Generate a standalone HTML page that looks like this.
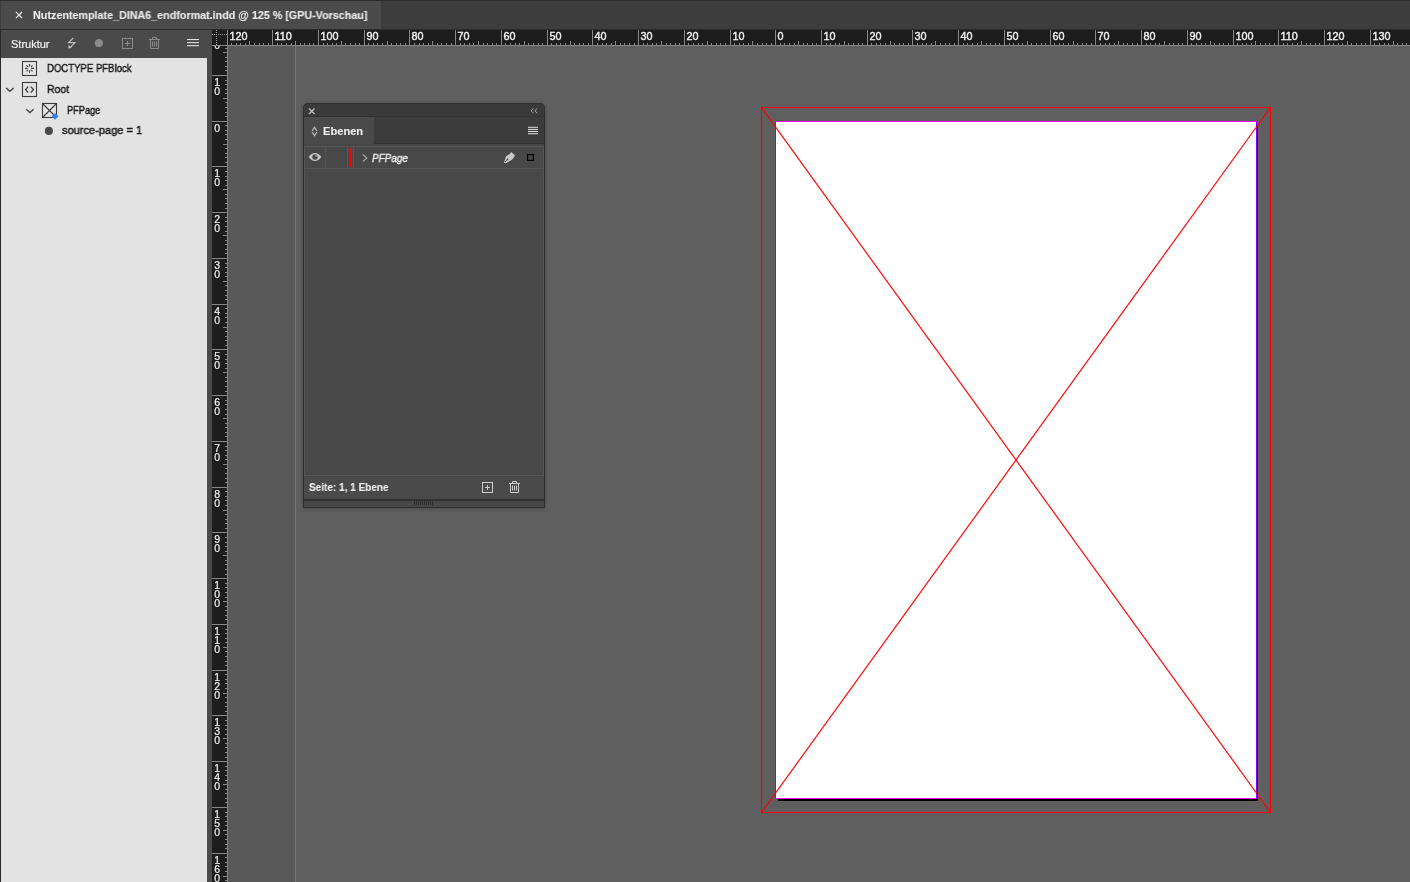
<!DOCTYPE html>
<html><head><meta charset="utf-8">
<style>
*{margin:0;padding:0;box-sizing:border-box}
html,body{width:1410px;height:882px;overflow:hidden;background:#2b2b2b;font-family:"Liberation Sans",sans-serif}
.a{position:absolute}
.t{position:absolute;white-space:nowrap;line-height:1;transform-origin:0 0;-webkit-text-stroke:0.1px currentColor;will-change:transform}
.dk{color:#1a1a1a;-webkit-text-stroke:0.45px #1a1a1a}
</style></head><body>
<!-- tab bar -->
<div class="a" style="left:0;top:0;width:1410px;height:29px;background:#3d3d3d;border-top:1px solid #2e2e2e"></div>
<div class="a" style="left:1px;top:1px;width:380px;height:28px;background:#4b4b4b"></div>
<div class="t" style="left:32.6px;top:10px;font-size:10.8px;font-weight:bold;color:#ededed;transform:scaleX(0.995)">Nutzentemplate_DINA6_endformat.indd @ 125 % [GPU-Vorschau]</div>

<!-- left panel -->
<div class="a" style="left:1px;top:30px;width:211px;height:28px;background:#4a4a4a"></div>
<div class="a" style="left:207px;top:58px;width:5px;height:824px;background:#4a4a4a"></div>
<div class="a" style="left:1px;top:58px;width:206px;height:824px;background:#e3e3e3"></div>
<div class="t" style="left:10.7px;top:39px;font-size:11px;color:#f0f0f0;-webkit-text-stroke:0.2px #f0f0f0">Struktur</div>
<div class="t dk" style="left:46.6px;top:63px;font-size:11.4px;transform:scaleX(0.84)">DOCTYPE PFBlock</div>
<div class="t dk" style="left:46.6px;top:84px;font-size:11.4px;transform:scaleX(0.92)">Root</div>
<div class="t dk" style="left:66.6px;top:105px;font-size:11.4px;transform:scaleX(0.81)">PFPage</div>
<div class="t dk" style="left:61.5px;top:125px;font-size:11.4px;transform:scaleX(0.97)">source-page = 1</div>

<!-- rulers -->
<div class="a" style="left:212px;top:30px;width:1198px;height:15px;background:#1d1d1d"></div>
<div class="a" style="left:212px;top:45px;width:15px;height:837px;background:#1d1d1d"></div>
<!-- canvas -->
<div class="a" style="left:228px;top:46px;width:1182px;height:836px;background:#5f5f5f"></div>
<div class="a" style="left:228px;top:46px;width:67px;height:836px;background:#595959"></div>
<div class="a" style="left:295px;top:46px;width:1px;height:836px;background:#767676"></div>
<svg class="a" style="left:0;top:0" width="1410" height="882">
 <g fill="#f0f0f0" stroke="#f0f0f0" stroke-width="0.2" font-family="Liberation Sans" font-size="10.5" text-anchor="middle"><text x="217.2" y="48.9">0</text><text x="217.2" y="85.5">1</text><text x="217.2" y="94.9">0</text><text x="217.2" y="131.5">0</text><text x="217.2" y="176.5">1</text><text x="217.2" y="185.9">0</text><text x="217.2" y="222.5">2</text><text x="217.2" y="231.9">0</text><text x="217.2" y="268.5">3</text><text x="217.2" y="277.9">0</text><text x="217.2" y="314.5">4</text><text x="217.2" y="323.9">0</text><text x="217.2" y="359.5">5</text><text x="217.2" y="368.9">0</text><text x="217.2" y="405.5">6</text><text x="217.2" y="414.9">0</text><text x="217.2" y="451.5">7</text><text x="217.2" y="460.9">0</text><text x="217.2" y="497.5">8</text><text x="217.2" y="506.9">0</text><text x="217.2" y="542.5">9</text><text x="217.2" y="551.9">0</text><text x="217.2" y="588.5">1</text><text x="217.2" y="597.9">0</text><text x="217.2" y="607.3">0</text><text x="217.2" y="634.5">1</text><text x="217.2" y="643.9">1</text><text x="217.2" y="653.3">0</text><text x="217.2" y="680.5">1</text><text x="217.2" y="689.9">2</text><text x="217.2" y="699.3">0</text><text x="217.2" y="725.5">1</text><text x="217.2" y="734.9">3</text><text x="217.2" y="744.3">0</text><text x="217.2" y="771.5">1</text><text x="217.2" y="780.9">4</text><text x="217.2" y="790.3">0</text><text x="217.2" y="817.5">1</text><text x="217.2" y="826.9">5</text><text x="217.2" y="836.3">0</text><text x="217.2" y="863.5">1</text><text x="217.2" y="872.9">6</text><text x="217.2" y="882.3">0</text></g>
 <rect x="212" y="30" width="15" height="15" fill="#1d1d1d"/>
 <g fill="#878787"><rect x="227" y="30" width="1" height="15"/><rect x="231" y="43" width="1" height="2"/><rect x="236" y="43" width="1" height="2"/><rect x="240" y="43" width="1" height="2"/><rect x="245" y="43" width="1" height="2"/><rect x="249" y="41" width="1" height="4"/><rect x="254" y="43" width="1" height="2"/><rect x="259" y="43" width="1" height="2"/><rect x="263" y="43" width="1" height="2"/><rect x="268" y="43" width="1" height="2"/><rect x="272" y="30" width="1" height="15"/><rect x="277" y="43" width="1" height="2"/><rect x="281" y="43" width="1" height="2"/><rect x="286" y="43" width="1" height="2"/><rect x="291" y="43" width="1" height="2"/><rect x="295" y="41" width="1" height="4"/><rect x="300" y="43" width="1" height="2"/><rect x="304" y="43" width="1" height="2"/><rect x="309" y="43" width="1" height="2"/><rect x="313" y="43" width="1" height="2"/><rect x="318" y="30" width="1" height="15"/><rect x="323" y="43" width="1" height="2"/><rect x="327" y="43" width="1" height="2"/><rect x="332" y="43" width="1" height="2"/><rect x="336" y="43" width="1" height="2"/><rect x="341" y="41" width="1" height="4"/><rect x="345" y="43" width="1" height="2"/><rect x="350" y="43" width="1" height="2"/><rect x="355" y="43" width="1" height="2"/><rect x="359" y="43" width="1" height="2"/><rect x="364" y="30" width="1" height="15"/><rect x="368" y="43" width="1" height="2"/><rect x="373" y="43" width="1" height="2"/><rect x="377" y="43" width="1" height="2"/><rect x="382" y="43" width="1" height="2"/><rect x="387" y="41" width="1" height="4"/><rect x="391" y="43" width="1" height="2"/><rect x="396" y="43" width="1" height="2"/><rect x="400" y="43" width="1" height="2"/><rect x="405" y="43" width="1" height="2"/><rect x="409" y="30" width="1" height="15"/><rect x="414" y="43" width="1" height="2"/><rect x="419" y="43" width="1" height="2"/><rect x="423" y="43" width="1" height="2"/><rect x="428" y="43" width="1" height="2"/><rect x="432" y="41" width="1" height="4"/><rect x="437" y="43" width="1" height="2"/><rect x="441" y="43" width="1" height="2"/><rect x="446" y="43" width="1" height="2"/><rect x="451" y="43" width="1" height="2"/><rect x="455" y="30" width="1" height="15"/><rect x="460" y="43" width="1" height="2"/><rect x="464" y="43" width="1" height="2"/><rect x="469" y="43" width="1" height="2"/><rect x="473" y="43" width="1" height="2"/><rect x="478" y="41" width="1" height="4"/><rect x="483" y="43" width="1" height="2"/><rect x="487" y="43" width="1" height="2"/><rect x="492" y="43" width="1" height="2"/><rect x="496" y="43" width="1" height="2"/><rect x="501" y="30" width="1" height="15"/><rect x="505" y="43" width="1" height="2"/><rect x="510" y="43" width="1" height="2"/><rect x="515" y="43" width="1" height="2"/><rect x="519" y="43" width="1" height="2"/><rect x="524" y="41" width="1" height="4"/><rect x="528" y="43" width="1" height="2"/><rect x="533" y="43" width="1" height="2"/><rect x="538" y="43" width="1" height="2"/><rect x="542" y="43" width="1" height="2"/><rect x="547" y="30" width="1" height="15"/><rect x="551" y="43" width="1" height="2"/><rect x="556" y="43" width="1" height="2"/><rect x="560" y="43" width="1" height="2"/><rect x="565" y="43" width="1" height="2"/><rect x="570" y="41" width="1" height="4"/><rect x="574" y="43" width="1" height="2"/><rect x="579" y="43" width="1" height="2"/><rect x="583" y="43" width="1" height="2"/><rect x="588" y="43" width="1" height="2"/><rect x="592" y="30" width="1" height="15"/><rect x="597" y="43" width="1" height="2"/><rect x="602" y="43" width="1" height="2"/><rect x="606" y="43" width="1" height="2"/><rect x="611" y="43" width="1" height="2"/><rect x="615" y="41" width="1" height="4"/><rect x="620" y="43" width="1" height="2"/><rect x="624" y="43" width="1" height="2"/><rect x="629" y="43" width="1" height="2"/><rect x="634" y="43" width="1" height="2"/><rect x="638" y="30" width="1" height="15"/><rect x="643" y="43" width="1" height="2"/><rect x="647" y="43" width="1" height="2"/><rect x="652" y="43" width="1" height="2"/><rect x="656" y="43" width="1" height="2"/><rect x="661" y="41" width="1" height="4"/><rect x="666" y="43" width="1" height="2"/><rect x="670" y="43" width="1" height="2"/><rect x="675" y="43" width="1" height="2"/><rect x="679" y="43" width="1" height="2"/><rect x="684" y="30" width="1" height="15"/><rect x="688" y="43" width="1" height="2"/><rect x="693" y="43" width="1" height="2"/><rect x="698" y="43" width="1" height="2"/><rect x="702" y="43" width="1" height="2"/><rect x="707" y="41" width="1" height="4"/><rect x="711" y="43" width="1" height="2"/><rect x="716" y="43" width="1" height="2"/><rect x="720" y="43" width="1" height="2"/><rect x="725" y="43" width="1" height="2"/><rect x="730" y="30" width="1" height="15"/><rect x="734" y="43" width="1" height="2"/><rect x="739" y="43" width="1" height="2"/><rect x="743" y="43" width="1" height="2"/><rect x="748" y="43" width="1" height="2"/><rect x="752" y="41" width="1" height="4"/><rect x="757" y="43" width="1" height="2"/><rect x="762" y="43" width="1" height="2"/><rect x="766" y="43" width="1" height="2"/><rect x="771" y="43" width="1" height="2"/><rect x="775" y="30" width="1" height="15"/><rect x="780" y="43" width="1" height="2"/><rect x="784" y="43" width="1" height="2"/><rect x="789" y="43" width="1" height="2"/><rect x="794" y="43" width="1" height="2"/><rect x="798" y="41" width="1" height="4"/><rect x="803" y="43" width="1" height="2"/><rect x="807" y="43" width="1" height="2"/><rect x="812" y="43" width="1" height="2"/><rect x="816" y="43" width="1" height="2"/><rect x="821" y="30" width="1" height="15"/><rect x="826" y="43" width="1" height="2"/><rect x="830" y="43" width="1" height="2"/><rect x="835" y="43" width="1" height="2"/><rect x="839" y="43" width="1" height="2"/><rect x="844" y="41" width="1" height="4"/><rect x="848" y="43" width="1" height="2"/><rect x="853" y="43" width="1" height="2"/><rect x="858" y="43" width="1" height="2"/><rect x="862" y="43" width="1" height="2"/><rect x="867" y="30" width="1" height="15"/><rect x="871" y="43" width="1" height="2"/><rect x="876" y="43" width="1" height="2"/><rect x="880" y="43" width="1" height="2"/><rect x="885" y="43" width="1" height="2"/><rect x="890" y="41" width="1" height="4"/><rect x="894" y="43" width="1" height="2"/><rect x="899" y="43" width="1" height="2"/><rect x="903" y="43" width="1" height="2"/><rect x="908" y="43" width="1" height="2"/><rect x="912" y="30" width="1" height="15"/><rect x="917" y="43" width="1" height="2"/><rect x="922" y="43" width="1" height="2"/><rect x="926" y="43" width="1" height="2"/><rect x="931" y="43" width="1" height="2"/><rect x="935" y="41" width="1" height="4"/><rect x="940" y="43" width="1" height="2"/><rect x="945" y="43" width="1" height="2"/><rect x="949" y="43" width="1" height="2"/><rect x="954" y="43" width="1" height="2"/><rect x="958" y="30" width="1" height="15"/><rect x="963" y="43" width="1" height="2"/><rect x="967" y="43" width="1" height="2"/><rect x="972" y="43" width="1" height="2"/><rect x="977" y="43" width="1" height="2"/><rect x="981" y="41" width="1" height="4"/><rect x="986" y="43" width="1" height="2"/><rect x="990" y="43" width="1" height="2"/><rect x="995" y="43" width="1" height="2"/><rect x="999" y="43" width="1" height="2"/><rect x="1004" y="30" width="1" height="15"/><rect x="1009" y="43" width="1" height="2"/><rect x="1013" y="43" width="1" height="2"/><rect x="1018" y="43" width="1" height="2"/><rect x="1022" y="43" width="1" height="2"/><rect x="1027" y="41" width="1" height="4"/><rect x="1031" y="43" width="1" height="2"/><rect x="1036" y="43" width="1" height="2"/><rect x="1041" y="43" width="1" height="2"/><rect x="1045" y="43" width="1" height="2"/><rect x="1050" y="30" width="1" height="15"/><rect x="1054" y="43" width="1" height="2"/><rect x="1059" y="43" width="1" height="2"/><rect x="1063" y="43" width="1" height="2"/><rect x="1068" y="43" width="1" height="2"/><rect x="1073" y="41" width="1" height="4"/><rect x="1077" y="43" width="1" height="2"/><rect x="1082" y="43" width="1" height="2"/><rect x="1086" y="43" width="1" height="2"/><rect x="1091" y="43" width="1" height="2"/><rect x="1095" y="30" width="1" height="15"/><rect x="1100" y="43" width="1" height="2"/><rect x="1105" y="43" width="1" height="2"/><rect x="1109" y="43" width="1" height="2"/><rect x="1114" y="43" width="1" height="2"/><rect x="1118" y="41" width="1" height="4"/><rect x="1123" y="43" width="1" height="2"/><rect x="1127" y="43" width="1" height="2"/><rect x="1132" y="43" width="1" height="2"/><rect x="1137" y="43" width="1" height="2"/><rect x="1141" y="30" width="1" height="15"/><rect x="1146" y="43" width="1" height="2"/><rect x="1150" y="43" width="1" height="2"/><rect x="1155" y="43" width="1" height="2"/><rect x="1159" y="43" width="1" height="2"/><rect x="1164" y="41" width="1" height="4"/><rect x="1169" y="43" width="1" height="2"/><rect x="1173" y="43" width="1" height="2"/><rect x="1178" y="43" width="1" height="2"/><rect x="1182" y="43" width="1" height="2"/><rect x="1187" y="30" width="1" height="15"/><rect x="1191" y="43" width="1" height="2"/><rect x="1196" y="43" width="1" height="2"/><rect x="1201" y="43" width="1" height="2"/><rect x="1205" y="43" width="1" height="2"/><rect x="1210" y="41" width="1" height="4"/><rect x="1214" y="43" width="1" height="2"/><rect x="1219" y="43" width="1" height="2"/><rect x="1223" y="43" width="1" height="2"/><rect x="1228" y="43" width="1" height="2"/><rect x="1233" y="30" width="1" height="15"/><rect x="1237" y="43" width="1" height="2"/><rect x="1242" y="43" width="1" height="2"/><rect x="1246" y="43" width="1" height="2"/><rect x="1251" y="43" width="1" height="2"/><rect x="1255" y="41" width="1" height="4"/><rect x="1260" y="43" width="1" height="2"/><rect x="1265" y="43" width="1" height="2"/><rect x="1269" y="43" width="1" height="2"/><rect x="1274" y="43" width="1" height="2"/><rect x="1278" y="30" width="1" height="15"/><rect x="1283" y="43" width="1" height="2"/><rect x="1287" y="43" width="1" height="2"/><rect x="1292" y="43" width="1" height="2"/><rect x="1297" y="43" width="1" height="2"/><rect x="1301" y="41" width="1" height="4"/><rect x="1306" y="43" width="1" height="2"/><rect x="1310" y="43" width="1" height="2"/><rect x="1315" y="43" width="1" height="2"/><rect x="1319" y="43" width="1" height="2"/><rect x="1324" y="30" width="1" height="15"/><rect x="1329" y="43" width="1" height="2"/><rect x="1333" y="43" width="1" height="2"/><rect x="1338" y="43" width="1" height="2"/><rect x="1342" y="43" width="1" height="2"/><rect x="1347" y="41" width="1" height="4"/><rect x="1351" y="43" width="1" height="2"/><rect x="1356" y="43" width="1" height="2"/><rect x="1361" y="43" width="1" height="2"/><rect x="1365" y="43" width="1" height="2"/><rect x="1370" y="30" width="1" height="15"/><rect x="1374" y="43" width="1" height="2"/><rect x="1379" y="43" width="1" height="2"/><rect x="1384" y="43" width="1" height="2"/><rect x="1388" y="43" width="1" height="2"/><rect x="1393" y="41" width="1" height="4"/><rect x="1397" y="43" width="1" height="2"/><rect x="1402" y="43" width="1" height="2"/><rect x="1406" y="43" width="1" height="2"/><rect x="225" y="48" width="2" height="1"/><rect x="223" y="52" width="4" height="1"/><rect x="225" y="57" width="2" height="1"/><rect x="225" y="61" width="2" height="1"/><rect x="225" y="66" width="2" height="1"/><rect x="225" y="70" width="2" height="1"/><rect x="212" y="75" width="15" height="1"/><rect x="225" y="80" width="2" height="1"/><rect x="225" y="84" width="2" height="1"/><rect x="225" y="89" width="2" height="1"/><rect x="225" y="93" width="2" height="1"/><rect x="223" y="98" width="4" height="1"/><rect x="225" y="102" width="2" height="1"/><rect x="225" y="107" width="2" height="1"/><rect x="225" y="112" width="2" height="1"/><rect x="225" y="116" width="2" height="1"/><rect x="212" y="121" width="15" height="1"/><rect x="225" y="125" width="2" height="1"/><rect x="225" y="130" width="2" height="1"/><rect x="225" y="134" width="2" height="1"/><rect x="225" y="139" width="2" height="1"/><rect x="223" y="144" width="4" height="1"/><rect x="225" y="148" width="2" height="1"/><rect x="225" y="153" width="2" height="1"/><rect x="225" y="157" width="2" height="1"/><rect x="225" y="162" width="2" height="1"/><rect x="212" y="166" width="15" height="1"/><rect x="225" y="171" width="2" height="1"/><rect x="225" y="176" width="2" height="1"/><rect x="225" y="180" width="2" height="1"/><rect x="225" y="185" width="2" height="1"/><rect x="223" y="189" width="4" height="1"/><rect x="225" y="194" width="2" height="1"/><rect x="225" y="198" width="2" height="1"/><rect x="225" y="203" width="2" height="1"/><rect x="225" y="208" width="2" height="1"/><rect x="212" y="212" width="15" height="1"/><rect x="225" y="217" width="2" height="1"/><rect x="225" y="221" width="2" height="1"/><rect x="225" y="226" width="2" height="1"/><rect x="225" y="231" width="2" height="1"/><rect x="223" y="235" width="4" height="1"/><rect x="225" y="240" width="2" height="1"/><rect x="225" y="244" width="2" height="1"/><rect x="225" y="249" width="2" height="1"/><rect x="225" y="253" width="2" height="1"/><rect x="212" y="258" width="15" height="1"/><rect x="225" y="263" width="2" height="1"/><rect x="225" y="267" width="2" height="1"/><rect x="225" y="272" width="2" height="1"/><rect x="225" y="276" width="2" height="1"/><rect x="223" y="281" width="4" height="1"/><rect x="225" y="285" width="2" height="1"/><rect x="225" y="290" width="2" height="1"/><rect x="225" y="295" width="2" height="1"/><rect x="225" y="299" width="2" height="1"/><rect x="212" y="304" width="15" height="1"/><rect x="225" y="308" width="2" height="1"/><rect x="225" y="313" width="2" height="1"/><rect x="225" y="317" width="2" height="1"/><rect x="225" y="322" width="2" height="1"/><rect x="223" y="327" width="4" height="1"/><rect x="225" y="331" width="2" height="1"/><rect x="225" y="336" width="2" height="1"/><rect x="225" y="340" width="2" height="1"/><rect x="225" y="345" width="2" height="1"/><rect x="212" y="349" width="15" height="1"/><rect x="225" y="354" width="2" height="1"/><rect x="225" y="359" width="2" height="1"/><rect x="225" y="363" width="2" height="1"/><rect x="225" y="368" width="2" height="1"/><rect x="223" y="372" width="4" height="1"/><rect x="225" y="377" width="2" height="1"/><rect x="225" y="381" width="2" height="1"/><rect x="225" y="386" width="2" height="1"/><rect x="225" y="391" width="2" height="1"/><rect x="212" y="395" width="15" height="1"/><rect x="225" y="400" width="2" height="1"/><rect x="225" y="404" width="2" height="1"/><rect x="225" y="409" width="2" height="1"/><rect x="225" y="414" width="2" height="1"/><rect x="223" y="418" width="4" height="1"/><rect x="225" y="423" width="2" height="1"/><rect x="225" y="427" width="2" height="1"/><rect x="225" y="432" width="2" height="1"/><rect x="225" y="436" width="2" height="1"/><rect x="212" y="441" width="15" height="1"/><rect x="225" y="446" width="2" height="1"/><rect x="225" y="450" width="2" height="1"/><rect x="225" y="455" width="2" height="1"/><rect x="225" y="459" width="2" height="1"/><rect x="223" y="464" width="4" height="1"/><rect x="225" y="468" width="2" height="1"/><rect x="225" y="473" width="2" height="1"/><rect x="225" y="478" width="2" height="1"/><rect x="225" y="482" width="2" height="1"/><rect x="212" y="487" width="15" height="1"/><rect x="225" y="491" width="2" height="1"/><rect x="225" y="496" width="2" height="1"/><rect x="225" y="500" width="2" height="1"/><rect x="225" y="505" width="2" height="1"/><rect x="223" y="510" width="4" height="1"/><rect x="225" y="514" width="2" height="1"/><rect x="225" y="519" width="2" height="1"/><rect x="225" y="523" width="2" height="1"/><rect x="225" y="528" width="2" height="1"/><rect x="212" y="532" width="15" height="1"/><rect x="225" y="537" width="2" height="1"/><rect x="225" y="542" width="2" height="1"/><rect x="225" y="546" width="2" height="1"/><rect x="225" y="551" width="2" height="1"/><rect x="223" y="555" width="4" height="1"/><rect x="225" y="560" width="2" height="1"/><rect x="225" y="564" width="2" height="1"/><rect x="225" y="569" width="2" height="1"/><rect x="225" y="574" width="2" height="1"/><rect x="212" y="578" width="15" height="1"/><rect x="225" y="583" width="2" height="1"/><rect x="225" y="587" width="2" height="1"/><rect x="225" y="592" width="2" height="1"/><rect x="225" y="597" width="2" height="1"/><rect x="223" y="601" width="4" height="1"/><rect x="225" y="606" width="2" height="1"/><rect x="225" y="610" width="2" height="1"/><rect x="225" y="615" width="2" height="1"/><rect x="225" y="619" width="2" height="1"/><rect x="212" y="624" width="15" height="1"/><rect x="225" y="629" width="2" height="1"/><rect x="225" y="633" width="2" height="1"/><rect x="225" y="638" width="2" height="1"/><rect x="225" y="642" width="2" height="1"/><rect x="223" y="647" width="4" height="1"/><rect x="225" y="651" width="2" height="1"/><rect x="225" y="656" width="2" height="1"/><rect x="225" y="661" width="2" height="1"/><rect x="225" y="665" width="2" height="1"/><rect x="212" y="670" width="15" height="1"/><rect x="225" y="674" width="2" height="1"/><rect x="225" y="679" width="2" height="1"/><rect x="225" y="683" width="2" height="1"/><rect x="225" y="688" width="2" height="1"/><rect x="223" y="693" width="4" height="1"/><rect x="225" y="697" width="2" height="1"/><rect x="225" y="702" width="2" height="1"/><rect x="225" y="706" width="2" height="1"/><rect x="225" y="711" width="2" height="1"/><rect x="212" y="715" width="15" height="1"/><rect x="225" y="720" width="2" height="1"/><rect x="225" y="725" width="2" height="1"/><rect x="225" y="729" width="2" height="1"/><rect x="225" y="734" width="2" height="1"/><rect x="223" y="738" width="4" height="1"/><rect x="225" y="743" width="2" height="1"/><rect x="225" y="747" width="2" height="1"/><rect x="225" y="752" width="2" height="1"/><rect x="225" y="757" width="2" height="1"/><rect x="212" y="761" width="15" height="1"/><rect x="225" y="766" width="2" height="1"/><rect x="225" y="770" width="2" height="1"/><rect x="225" y="775" width="2" height="1"/><rect x="225" y="780" width="2" height="1"/><rect x="223" y="784" width="4" height="1"/><rect x="225" y="789" width="2" height="1"/><rect x="225" y="793" width="2" height="1"/><rect x="225" y="798" width="2" height="1"/><rect x="225" y="802" width="2" height="1"/><rect x="212" y="807" width="15" height="1"/><rect x="225" y="812" width="2" height="1"/><rect x="225" y="816" width="2" height="1"/><rect x="225" y="821" width="2" height="1"/><rect x="225" y="825" width="2" height="1"/><rect x="223" y="830" width="4" height="1"/><rect x="225" y="834" width="2" height="1"/><rect x="225" y="839" width="2" height="1"/><rect x="225" y="844" width="2" height="1"/><rect x="225" y="848" width="2" height="1"/><rect x="212" y="853" width="15" height="1"/><rect x="225" y="857" width="2" height="1"/><rect x="225" y="862" width="2" height="1"/><rect x="225" y="866" width="2" height="1"/><rect x="225" y="871" width="2" height="1"/><rect x="223" y="876" width="4" height="1"/><rect x="225" y="880" width="2" height="1"/>
  <rect x="212" y="45" width="1198" height="1"/><rect x="227" y="30" width="1" height="852"/>
 </g>
 <g fill="#9a9a9a"><rect x="216" y="30" width="1" height="1"/><rect x="216" y="32" width="1" height="1"/><rect x="216" y="34" width="1" height="1"/><rect x="216" y="36" width="1" height="1"/><rect x="216" y="38" width="1" height="1"/><rect x="216" y="40" width="1" height="1"/><rect x="216" y="42" width="1" height="1"/><rect x="216" y="44" width="1" height="1"/><rect x="212" y="34" width="1" height="1"/><rect x="214" y="34" width="1" height="1"/><rect x="216" y="34" width="1" height="1"/><rect x="218" y="34" width="1" height="1"/><rect x="220" y="34" width="1" height="1"/><rect x="222" y="34" width="1" height="1"/><rect x="224" y="34" width="1" height="1"/><rect x="226" y="34" width="1" height="1"/></g>
 <g fill="#f0f0f0" stroke="#f0f0f0" stroke-width="0.4" font-family="Liberation Sans" font-size="10.8"><text x="229.5" y="39.8">120</text><text x="274.5" y="39.8">110</text><text x="320.5" y="39.8">100</text><text x="366.5" y="39.8">90</text><text x="411.5" y="39.8">80</text><text x="457.5" y="39.8">70</text><text x="503.5" y="39.8">60</text><text x="549.5" y="39.8">50</text><text x="594.5" y="39.8">40</text><text x="640.5" y="39.8">30</text><text x="686.5" y="39.8">20</text><text x="732.5" y="39.8">10</text><text x="777.5" y="39.8">0</text><text x="823.5" y="39.8">10</text><text x="869.5" y="39.8">20</text><text x="914.5" y="39.8">30</text><text x="960.5" y="39.8">40</text><text x="1006.5" y="39.8">50</text><text x="1052.5" y="39.8">60</text><text x="1097.5" y="39.8">70</text><text x="1143.5" y="39.8">80</text><text x="1189.5" y="39.8">90</text><text x="1235.5" y="39.8">100</text><text x="1280.5" y="39.8">110</text><text x="1326.5" y="39.8">120</text><text x="1372.5" y="39.8">130</text></g>
</svg>

<!-- page -->
<div class="a" style="left:1257px;top:124px;width:1px;height:677px;background:#000"></div>
<div class="a" style="left:778px;top:799px;width:480px;height:2px;background:#000"></div>
<div class="a" style="left:775px;top:121px;width:482px;height:678px;background:#fff;border-top:1px solid #f0f;border-left:1px solid #80f;border-right:1px solid #80f;border-bottom:1px solid #f0f"></div>
<svg class="a" style="left:0;top:0" width="1410" height="882">
 <g stroke="#ff0000" stroke-width="1.15" fill="none">
  <rect x="761.5" y="107.5" width="509" height="705"/>
  <path d="M761.5 107.5 L1270.5 812.5 M1270.5 107.5 L761.5 812.5"/>
 </g>
</svg>

<!-- Ebenen panel -->
<div class="a" style="left:303px;top:103px;width:242px;height:405px;background:#2f2f2f;border-radius:5px 5px 0 0;box-shadow:0 1px 4px rgba(0,0,0,0.22)"></div>
<div class="a" style="left:304px;top:104px;width:240px;height:13px;background:#3a3a3a;border-radius:4px 4px 0 0"></div>
<div class="a" style="left:304px;top:117px;width:240px;height:27px;background:#3c3c3c"></div>
<div class="a" style="left:304px;top:117px;width:70px;height:27px;background:#4a4a4a"></div>
<div class="a" style="left:304px;top:144px;width:240px;height:356px;background:#474747"></div>
<div class="a" style="left:304px;top:146px;width:240px;height:330px;background:#484848;border:1px solid #555"></div>
<div class="a" style="left:304px;top:116px;width:240px;height:1px;background:#323232"></div>
<div class="a" style="left:374px;top:143px;width:170px;height:1px;background:#323232"></div>
<div class="a" style="left:305px;top:168px;width:238px;height:1px;background:#555"></div>
<div class="a" style="left:325px;top:147px;width:1px;height:21px;background:#555"></div>
<div class="a" style="left:347px;top:147px;width:1px;height:21px;background:#555"></div>
<div class="a" style="left:353px;top:147px;width:1px;height:21px;background:#555"></div>
<div class="a" style="left:349px;top:148px;width:3px;height:19px;background:#ff0000"></div>
<div class="a" style="left:304px;top:477px;width:240px;height:22px;background:#4a4a4a"></div>
<div class="a" style="left:304px;top:499px;width:240px;height:2px;background:#313131"></div>
<div class="a" style="left:304px;top:501px;width:240px;height:6px;background:#474747"></div>
<div class="t" style="left:322.5px;top:126px;font-size:10.8px;font-weight:bold;color:#f0f0f0;transform:scaleX(1.03)">Ebenen</div>
<div class="t" style="left:372px;top:153px;font-size:10.8px;font-style:italic;color:#f2f2f2;-webkit-text-stroke:0.35px #f2f2f2;transform:scaleX(0.92)">PFPage</div>
<div class="t" style="left:309px;top:482px;font-size:11px;font-weight:bold;color:#efefef;transform:scaleX(0.91)">Seite: 1, 1 Ebene</div>

<!-- icons overlay -->
<svg class="a" style="left:0;top:0" width="1410" height="882">
 <!-- tab close -->
 <path d="M16 12 L22 18 M22 12 L16 18" stroke="#e6e6e6" stroke-width="1.3" fill="none"/>
 <!-- Struktur header icons -->
 <path d="M73.2 38 L68.6 42.6 H75 L69.6 48" stroke="#bdbdbd" stroke-width="1.1" fill="none"/>
 <path d="M68.2 48.4 L68.6 45 L71.8 47.8 Z" fill="#bdbdbd"/>
 <circle cx="98.9" cy="43.1" r="4.2" fill="#8b8b8b"/>
 <g fill="none" stroke="#8a8a8a" stroke-width="1">
  <rect x="122.5" y="38.5" width="10" height="10"/>
  <path d="M127.5 41 V46.2 M124.9 43.6 H130.1"/>
  <path d="M149 39.5 H160 M150.5 40 V48.5 H158.5 V40 M152.5 39.5 V37.5 H156.5 V39.5 M152.5 41.5 V46.5 M154.5 41.5 V46.5 M156.5 41.5 V46.5"/>
 </g>
 <g fill="#e2e2e2"><rect x="187" y="39" width="12" height="1.1"/><rect x="187" y="42.1" width="12" height="1.1"/><rect x="187" y="45.1" width="12" height="1.1"/></g>
 <!-- tree icons -->
 <g fill="none" stroke="#3c3c3c" stroke-width="1.1">
  <rect x="22.5" y="61.5" width="14" height="14"/>
  <rect x="22.5" y="82.5" width="14" height="14"/>
  <rect x="42.5" y="103.5" width="14" height="14"/>
  <path d="M42.5 103.5 L56.5 117.5 M56.5 103.5 L42.5 117.5"/>
 </g>
 <g fill="none" stroke="#444" stroke-width="1.4">
  <path d="M6.2 88 L9.9 91.3 L13.6 88"/>
  <path d="M26.2 109.3 L29.9 112.6 L33.6 109.3"/>
  <path d="M28.2 86.6 L25.6 89.6 L28.2 92.6 M30.8 86.6 L33.4 89.6 L30.8 92.6"/>
 </g>
 <g fill="none" stroke="#3c3c3c" stroke-width="1.1">
  <path d="M29.5 64 V66.6 M29.5 70.2 V72.8 M25 68.4 H27.8 M31.2 68.4 H34 M26.5 65.4 L28 66.9 M32.5 65.4 L31 66.9 M26.5 71.4 L28 69.9 M32.5 71.4 L31 69.9"/>
 </g>
 <rect x="52.6" y="113.9" width="4.8" height="4.8" fill="#2f86f0" transform="rotate(45 55 116.3)"/>
 <circle cx="48.9" cy="130.9" r="4.05" fill="#4a4a4a"/>
 <!-- Ebenen panel icons -->
 <path d="M309 108.5 L314.5 114 M314.5 108.5 L309 114" stroke="#c4c4c4" stroke-width="1.2" fill="none"/>
 <path d="M533.5 108.5 L531 110.8 L533.5 113.1 M537.3 108.5 L534.8 110.8 L537.3 113.1" stroke="#aaa" stroke-width="1" fill="none"/>
 <path d="M312.1 130.8 L314.5 127.4 L316.9 130.8 M312.1 132.2 L314.5 135.6 L316.9 132.2" stroke="#b4b4b4" stroke-width="1.25" fill="none"/>
 <g fill="#e2e2e2"><rect x="528" y="126.8" width="10" height="1"/><rect x="528" y="128.9" width="10" height="1"/><rect x="528" y="131" width="10" height="1"/><rect x="528" y="133.2" width="10" height="1"/></g>
 <path d="M308.6 157 Q315 149.1 321.4 157 Q315 164.9 308.6 157 Z" fill="#c8c8c8"/>
 <circle cx="315" cy="157" r="2.7" fill="#474747"/>
 <path d="M315.3 156.7 V154.7 A2 2 0 0 1 317.3 156.7 Z" fill="#9a9a9a"/>
 <path d="M363 154.3 L366.8 158 L363 161.7" stroke="#aaa" stroke-width="1.1" fill="none"/>
 <path d="M504 162.8 L506 156.2 L510 153.7 L511.4 152 L515 155.6 L513.5 157.9 L511.6 160.1 L505.8 163.2 Z" fill="#c8c8c8"/>
 <path d="M505 162 L507.4 159.5" stroke="#474747" stroke-width="0.9"/>
 <circle cx="507.5" cy="159.4" r="0.9" fill="#474747"/>
 <rect x="527.6" y="154.6" width="5.8" height="5.8" fill="none" stroke="#000" stroke-width="1.2"/>
 <g fill="none" stroke="#cdcdcd" stroke-width="1">
  <rect x="482.5" y="482.5" width="10" height="10"/>
  <path d="M487.5 485 V490 M485 487.5 H490"/>
  <path d="M509 483.5 H520 M510.5 484 V492.5 H518.5 V484 M512.5 483.5 V481.5 H516.5 V483.5 M512.5 485.5 V490.5 M514.5 485.5 V490.5 M516.5 485.5 V490.5"/>
 </g>
 <g fill="#2c2c2c"><rect x="414" y="501" width="1" height="4"/><rect x="416" y="501" width="1" height="4"/><rect x="418" y="501" width="1" height="4"/><rect x="420" y="501" width="1" height="4"/><rect x="422" y="501" width="1" height="4"/><rect x="424" y="501" width="1" height="4"/><rect x="426" y="501" width="1" height="4"/><rect x="428" y="501" width="1" height="4"/><rect x="430" y="501" width="1" height="4"/><rect x="432" y="501" width="1" height="4"/></g>
</svg>
</body></html>
